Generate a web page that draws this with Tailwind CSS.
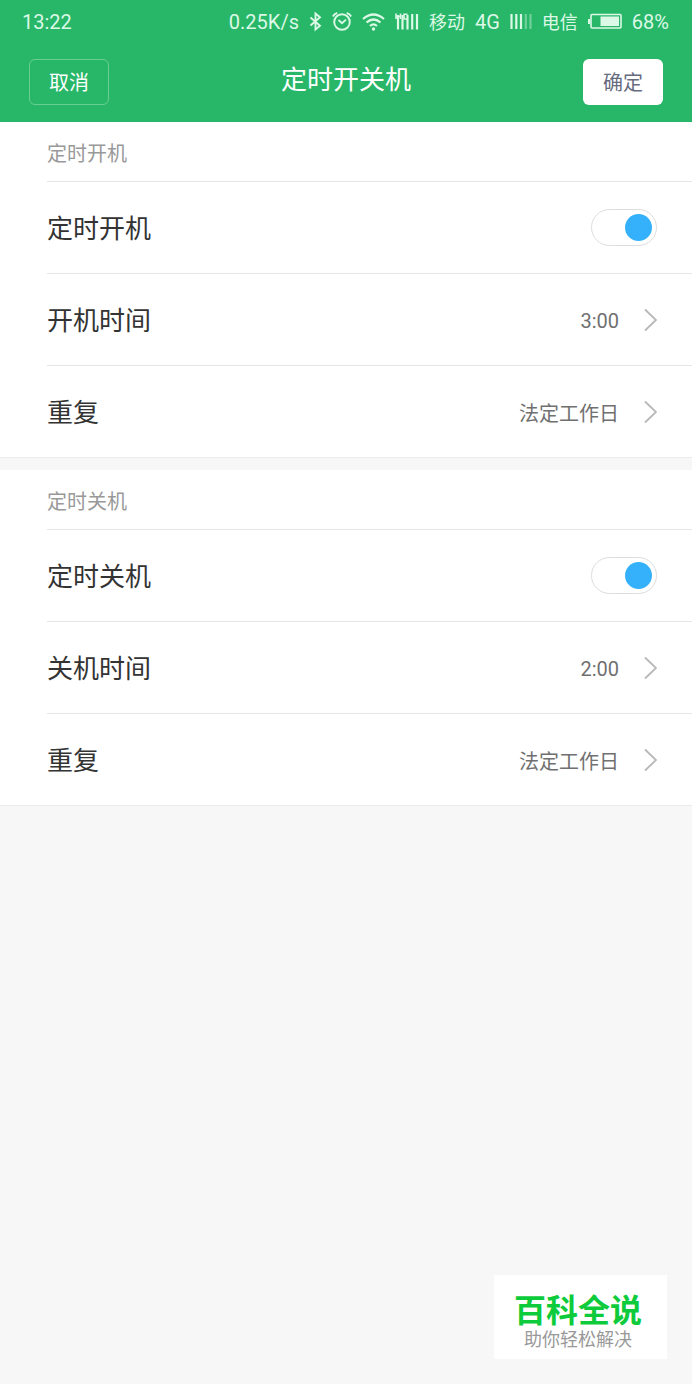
<!DOCTYPE html>
<html lang="zh-CN">
<head>
  <meta charset="UTF-8">
  <meta name="viewport" content="width=device-width, initial-scale=1.0">
  <title>定时开关机</title>
  <script src="https://cdn.jsdelivr.net/npm/@tailwindcss/browser@4"></script>
</head>
<body class="min-h-screen flex flex-col bg-[#f7f7f7] font-[Roboto,'Noto_Sans_CJK_SC',sans-serif] text-[20px] text-[#333333]">
  <header class="bg-[#28b768] text-white">
    <!-- Barra de estado -->
    <div class="flex items-center justify-between h-11 pl-[22px] pr-[23px] text-[#dcf8e6]">
      <span>13:22</span>
      <div class="flex items-center gap-[10px]">
        <span>0.25K/s</span>
        <svg class="w-[13px] h-5" viewBox="0 0 13 20" fill="none" stroke="currentColor" stroke-width="1.9"><path d="M1.5 5.5 11 13.7 6.5 17.5V1.500L11 5.300 1.500 13.500"/></svg>
        <svg class="w-5 h-5" viewBox="0 0 20 20" fill="none" stroke="currentColor" stroke-width="1.9"><circle cx="10" cy="10" r="7.8"/><path d="M6.5 8 10 11.2l4-3.600M.8 4.500Q2.200 1.800 5.300 1M19.200 4.500Q17.800 1.800 14.700 1"/></svg>
        <svg class="w-[23px] h-5" viewBox="0 0 23 20" fill="none" stroke="currentColor" stroke-width="2.2"><path d="M1 7Q11.500-2 22 7M4.500 10.500Q11.500 4.500 18.500 10.500M8 14Q11.500 10.700 15 14"/><circle cx="11.500" cy="17" r="1.700" fill="currentColor" stroke="none"/></svg>
        <svg class="w-6 h-5" viewBox="0 0 24 20" fill="none" stroke="currentColor" stroke-width="2.2"><path d="M3 3v14.500M7.500 3v14.500M12.500 3v14.500M17.200 2v15.500M22 2v15.500"/><path stroke-width="1.6" d="M1 1.500v5.500M1 4.500h5M5.500 1.500v5.500M9 1.500v6M9 2.300h3.500M9 7h3"/></svg>
        <span class="text-[18px]">移动</span>
        <span>4G</span>
        <svg class="w-[22px] h-5" viewBox="0 0 22 20" fill="none" stroke="currentColor" stroke-width="2.2"><path d="M1.500 2v15M6.300 2v15M11 2v15"/><path opacity=".4" d="M15.800 2v15M20.500 2v15"/></svg>
        <span class="text-[18px]">电信</span>
        <svg class="w-[34px] h-5" viewBox="0 0 34 20" fill="none" stroke="currentColor" stroke-width="1.6"><rect x="3" y="2.500" width="30" height="13.500" rx="1"/><path stroke-width="2" d="M1 7v5"/><path fill="currentColor" stroke="none" d="M12.500 4.500h18.500v9.500H12.500z"/></svg>
        <span>68%</span>
      </div>
    </div>
    <!-- Cabecera -->
    <div class="flex items-start justify-between h-[78px] px-[29px] pt-[15px]">
      <button type="button" class="w-20 h-[46px] pt-0.5 rounded-md border border-[#69ce93]">取消</button>
      <h1 class="pt-px text-[26px] leading-10">定时开关机</h1>
      <button type="button" class="w-20 h-[46px] pt-0.5 rounded-md bg-white text-[#666b80]">确定</button>
    </div>
  </header>

  <main>
    <section class="bg-white border-b border-[#ebebeb] pl-[47px]">
      <h2 class="flex items-center h-[59px] pt-1 text-[#999999]">定时开机</h2>
      <div class="flex items-center justify-between h-[92px] pr-[35px] border-t border-[#e6e6e6]">
        <label for="encendido" class="pt-1 text-[26px]">定时开机</label>
        <input id="encendido" type="checkbox" checked class="appearance-none flex items-center w-[66px] h-[37px] px-1 rounded-full border border-[#dddddd] bg-white before:size-[27px] before:rounded-full before:bg-[#bbbbbb] checked:justify-end checked:before:bg-[#35b1fb]">
      </div>
      <button type="button" class="flex items-center w-full h-[92px] pr-[35px] border-t border-[#e6e6e6]">
        <span class="pt-1 text-[26px]">开机时间</span>
        <span class="ml-auto mr-[25px] pt-0.5 text-[#707070]">3:00</span>
        <svg class="w-[13px] h-6" viewBox="0 0 13 24" fill="none" stroke="#b8b8b8" stroke-width="1.8"><path d="M1 1.500 12 12 1 22.500"/></svg>
      </button>
      <button type="button" class="flex items-center w-full h-[92px] pr-[35px] border-t border-[#e6e6e6]">
        <span class="pt-1 text-[26px]">重复</span>
        <span class="ml-auto mr-[25px] pt-1 text-[#707070]">法定工作日</span>
        <svg class="w-[13px] h-6" viewBox="0 0 13 24" fill="none" stroke="#b8b8b8" stroke-width="1.8"><path d="M1 1.500 12 12 1 22.500"/></svg>
      </button>
    </section>

    <section class="mt-3 bg-white border-b border-[#ebebeb] pl-[47px]">
      <h2 class="flex items-center h-[59px] pt-1 text-[#999999]">定时关机</h2>
      <div class="flex items-center justify-between h-[92px] pr-[35px] border-t border-[#e6e6e6]">
        <label for="apagado" class="pt-1 text-[26px]">定时关机</label>
        <input id="apagado" type="checkbox" checked class="appearance-none flex items-center w-[66px] h-[37px] px-1 rounded-full border border-[#dddddd] bg-white before:size-[27px] before:rounded-full before:bg-[#bbbbbb] checked:justify-end checked:before:bg-[#35b1fb]">
      </div>
      <button type="button" class="flex items-center w-full h-[92px] pr-[35px] border-t border-[#e6e6e6]">
        <span class="pt-1 text-[26px]">关机时间</span>
        <span class="ml-auto mr-[25px] pt-0.5 text-[#707070]">2:00</span>
        <svg class="w-[13px] h-6" viewBox="0 0 13 24" fill="none" stroke="#b8b8b8" stroke-width="1.8"><path d="M1 1.500 12 12 1 22.500"/></svg>
      </button>
      <button type="button" class="flex items-center w-full h-[92px] pr-[35px] border-t border-[#e6e6e6]">
        <span class="pt-1 text-[26px]">重复</span>
        <span class="ml-auto mr-[25px] pt-1 text-[#707070]">法定工作日</span>
        <svg class="w-[13px] h-6" viewBox="0 0 13 24" fill="none" stroke="#b8b8b8" stroke-width="1.8"><path d="M1 1.500 12 12 1 22.500"/></svg>
      </button>
    </section>
  </main>

  <footer class="mt-auto ml-auto mr-[25px] mb-[25px] pl-5 pr-[25px] pt-[18px] pb-2 bg-white text-center">
    <p class="text-[32px] leading-9 font-bold text-[#0dcb3b]">百科全说</p>
    <p class="text-[18px] leading-[22px] text-[#999999]">助你轻松解决</p>
  </footer>
</body>
</html>
